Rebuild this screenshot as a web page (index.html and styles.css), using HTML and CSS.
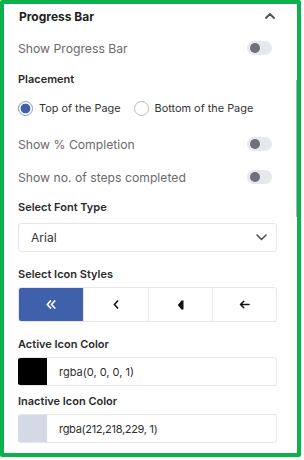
FILE: index.html
```html
<!DOCTYPE html>
<html lang="en">
<head>
  <meta charset="UTF-8">
  <title>Progress Bar Settings</title>
  <link rel="stylesheet" href="styles.css">
</head>
<body>
  <div class="panel">
    <div class="scroll-thumb"></div>

    <div class="panel-head">
      <span class="panel-title">Progress Bar</span>
      <svg class="chev" width="10" height="6" viewBox="0 0 10 6"><path d="M1 5 L5 1 L9 5" fill="none" stroke="#4a4f5a" stroke-width="1.8" stroke-linecap="round" stroke-linejoin="round"/></svg>
    </div>

    <div class="toggle-row first">
      <span>Show Progress Bar</span>
      <span class="toggle"><span class="knob"></span></span>
    </div>

    <div class="label placement">Placement</div>
    <div class="radios">
      <label class="radio"><span class="dot on"></span>Top of the Page</label>
      <label class="radio"><span class="dot"></span>Bottom of the Page</label>
    </div>

    <div class="toggle-row pct">
      <span>Show % Completion</span>
      <span class="toggle"><span class="knob"></span></span>
    </div>
    <div class="toggle-row steps">
      <span>Show no. of steps completed</span>
      <span class="toggle"><span class="knob"></span></span>
    </div>

    <div class="label font-label">Select Font Type</div>
    <div class="select">
      <span>Arial</span>
      <svg width="11" height="7" viewBox="0 0 11 7"><path d="M1 1 L5.5 5.5 L10 1" fill="none" stroke="#555" stroke-width="1.6" stroke-linecap="round" stroke-linejoin="round"/></svg>
    </div>

    <div class="label icon-label">Select Icon Styles</div>
    <div class="seg">
      <div class="seg-btn active">
        <svg width="10" height="9" viewBox="0 0 10 9"><path d="M4.5 1 L1.3 4.5 L4.5 8 M8.7 1 L5.5 4.5 L8.7 8" fill="none" stroke="#fff" stroke-width="1.7" stroke-linecap="round" stroke-linejoin="round"/></svg>
      </div>
      <div class="seg-btn">
        <svg width="6" height="9" viewBox="0 0 6 9"><path d="M4.6 1 L1.4 4.5 L4.6 8" fill="none" stroke="#111" stroke-width="1.6" stroke-linecap="round" stroke-linejoin="round"/></svg>
      </div>
      <div class="seg-btn">
        <svg width="7" height="10" viewBox="0 0 7 10"><path d="M6.5 0.5 L6.5 9.5 L4.5 9.5 L0.8 5 L4.5 0.5 Z" fill="#111"/></svg>
      </div>
      <div class="seg-btn">
        <svg width="11" height="9" viewBox="0 0 11 9"><path d="M10 4.5 L1.5 4.5 M4.8 1.2 L1.5 4.5 L4.8 7.8" fill="none" stroke="#111" stroke-width="1.5" stroke-linecap="round" stroke-linejoin="round"/></svg>
      </div>
    </div>

    <div class="label active-label">Active Icon Color</div>
    <div class="color-input">
      <span class="swatch black"></span>
      <span class="color-text">rgba(0, 0, 0, 1)</span>
    </div>

    <div class="label inactive-label">Inactive Icon Color</div>
    <div class="color-input">
      <span class="swatch grey"></span>
      <span class="color-text tight">rgba(212,218,229, 1)</span>
    </div>
  </div>
</body>
</html>
```

FILE: styles.css
```css
:root {
  --green: #0db14b;
  --border: #e4e6ea;
  --text: #2b2b2b;
  --muted: #6a6a6a;
  --blue: #3f60aa;
}
body {
  margin: 0;
  background: #fff;
  font-family: Inter, "Noto Sans", Arial, sans-serif;
}
.panel {
  position: relative;
  box-sizing: border-box;
  width: 301px;
  height: 457px;
  border: 4px solid var(--green);
  border-radius: 2px;
  padding: 0 20px 0 14px;
  overflow: hidden;
}
.scroll-thumb {
  position: absolute;
  right: 0;
  top: 76px;
  width: 1px;
  height: 137px;
  background: #a7b1cf;
}
.panel-head {
  height: 24px;
  display: flex;
  align-items: center;
  justify-content: space-between;
}
.panel-title {
  font-size: 12px;
  font-weight: 700;
  color: #1e1e1e;
  padding-left: 1px;
}
.chev {
  margin-right: 2px;
}
.toggle-row {
  height: 24px;
  display: flex;
  align-items: center;
  justify-content: space-between;
  font-size: 12.2px;
  color: var(--muted);
}
.toggle-row.first { margin-top: 8px; }
.toggle-row.pct { margin-top: 12px; }
.toggle-row.steps { margin-top: 9px; }
.toggle {
  width: 25px;
  height: 14px;
  border-radius: 7px;
  background: #e7e8eb;
  margin-right: 5px;
  display: flex;
  align-items: center;
  padding-left: 3px;
  box-sizing: border-box;
}
.knob {
  width: 10px;
  height: 10px;
  border-radius: 50%;
  background: #6d717d;
}
.label {
  height: 18px;
  display: flex;
  align-items: center;
  font-size: 11px;
  font-weight: 600;
  color: var(--text);
}
.placement { margin-top: 10px; }
.font-label { margin-top: 9px; }
.icon-label { margin-top: 13px; }
.active-label { margin-top: 13px; }
.inactive-label { margin-top: 6px; }
.radios {
  height: 24px;
  margin-top: 8px;
  display: flex;
  align-items: center;
  gap: 13px;
  font-size: 10.9px;
  color: #333;
}
.radio {
  display: flex;
  align-items: center;
  gap: 6px;
}
.dot {
  box-sizing: border-box;
  width: 15px;
  height: 15px;
  border-radius: 50%;
  border: 1px solid #bcbcbc;
  background: #fff;
}
.dot.on {
  border: 1.5px solid #8497cf;
  background: radial-gradient(circle, var(--blue) 0 4.6px, #fff 5.2px);
}
.select {
  box-sizing: border-box;
  height: 29px;
  margin-top: 7px;
  border: 1px solid var(--border);
  border-radius: 3px;
  display: flex;
  align-items: center;
  justify-content: space-between;
  padding: 0 9px 0 12px;
  font-size: 12px;
  color: #333;
}
.seg {
  box-sizing: border-box;
  height: 35px;
  margin-top: 4px;
  border: 1px solid var(--border);
  border-radius: 3px;
  display: grid;
  grid-template-columns: repeat(4, 1fr);
  overflow: hidden;
}
.seg-btn {
  display: flex;
  align-items: center;
  justify-content: center;
  border-left: 1px solid var(--border);
}
.seg-btn:first-child { border-left: none; }
.seg-btn.active {
  background: var(--blue);
}
.color-input {
  box-sizing: border-box;
  height: 29px;
  margin-top: 4px;
  border: 1px solid var(--border);
  border-left: none;
  border-radius: 3px;
  display: flex;
  align-items: center;
  overflow: hidden;
}
.swatch {
  width: 29px;
  height: 29px;
}
.swatch.black { background: #000; }
.swatch.grey { background: #d4dae5; }
.color-text {
  margin-left: 12px;
  font-size: 11px;
  color: #2e2e2e;
}
.color-text.tight {
  letter-spacing: -0.3px;
}
```
